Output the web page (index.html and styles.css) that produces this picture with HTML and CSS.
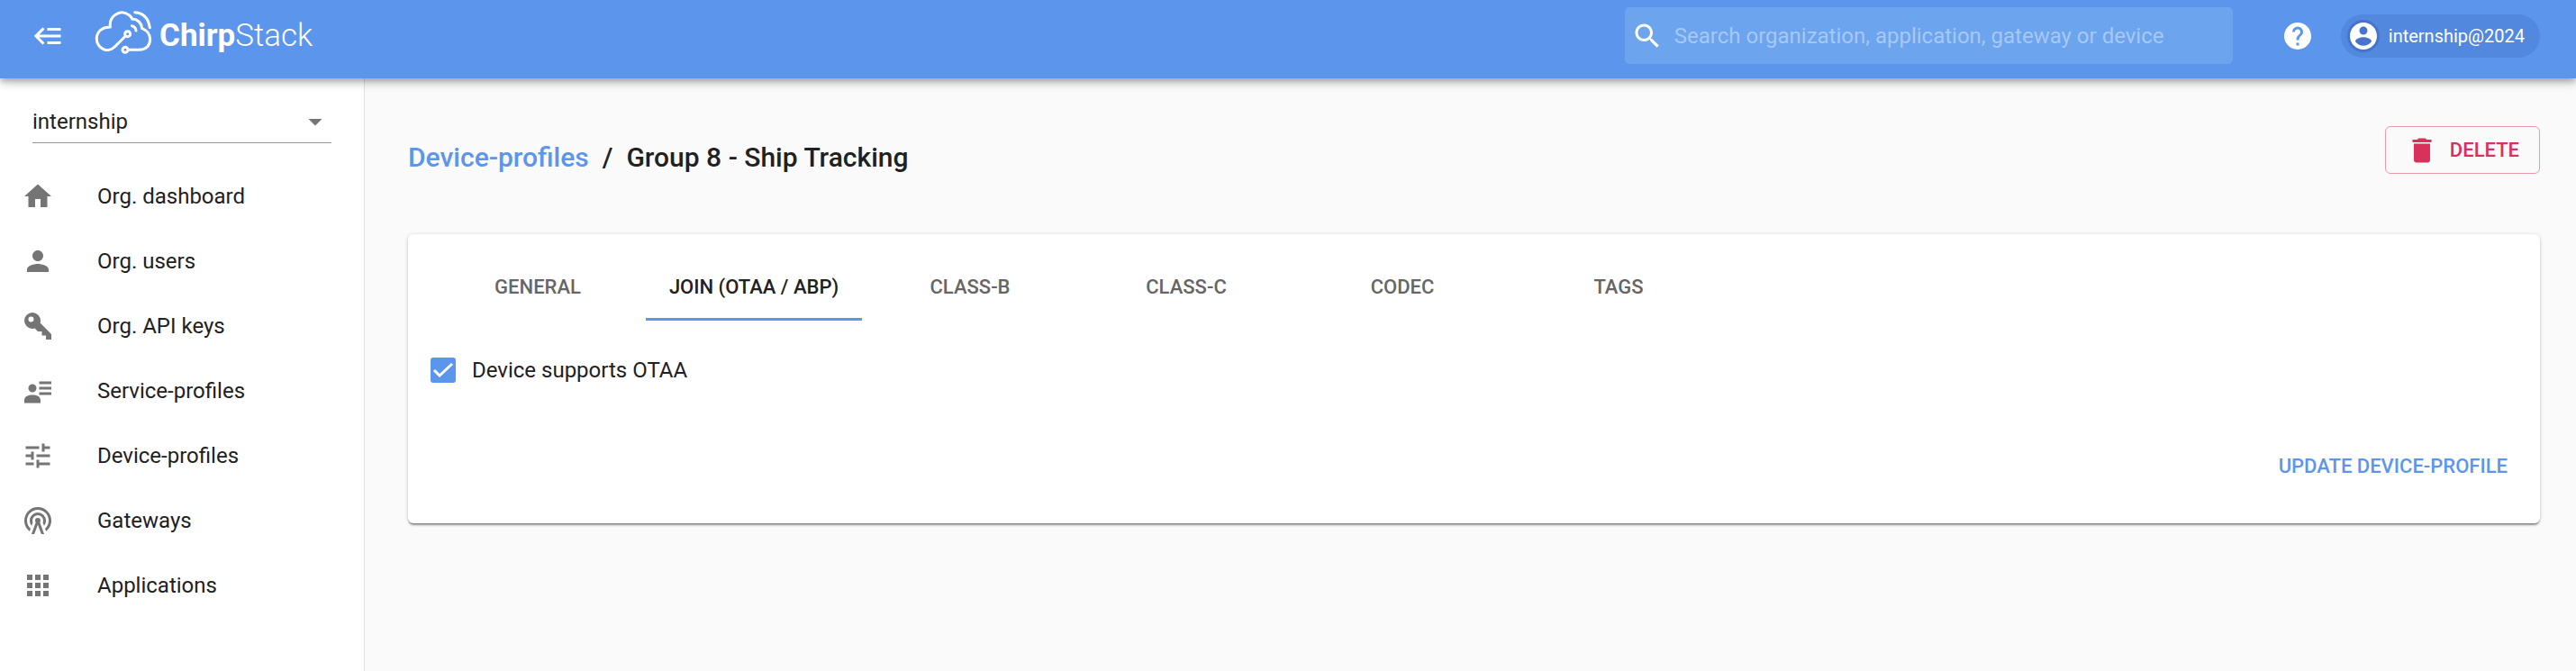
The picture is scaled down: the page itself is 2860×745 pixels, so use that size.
FILE: index.html
```html
<!DOCTYPE html>
<html lang="en">
<head>
<meta charset="utf-8">
<title>ChirpStack</title>
<link rel="stylesheet" href="styles.css">
</head>
<body>
<header class="topbar">
  <button class="icon-button" type="button" aria-label="Toggle menu"><svg class="icon" viewBox="0 0 24 24"><path d="M5,13L9,17L7.6,18.42L1.18,12L7.6,5.58L9,7L5,11H21V13H5M21,6V8H11V6H21M21,16V18H11V16H21Z"/></svg></button>
  <a class="logo" href="#">
    <svg class="logo-mark" viewBox="42 30 195 150" aria-hidden="true">
      <g fill="none" stroke="#fff" stroke-width="9" stroke-linecap="round">
        <path d="M148 117L115 150Q102 164 86 164A38 38 0 1 1 94 88L97 87Q94 61 113 47Q137 29 161 48Q167 53 170 60Q199 62 203 92Q230 101 230 129Q228 162 193 163H158"/>
        <circle cx="155" cy="110" r="9"/>
        <circle cx="147" cy="163" r="9"/>
        <path d="M179 38Q222 41 229 89M169 83Q182 86 183 99"/>
      </g>
    </svg>
    <span class="logo-text"><b>Chirp</b>Stack</span>
  </a>
  <form class="search" role="search">
    <svg class="icon" viewBox="0 0 24 24" aria-hidden="true"><path d="M15.5 14h-.79l-.28-.27C15.41 12.59 16 11.11 16 9.5 16 5.91 13.09 3 9.5 3S3 5.91 3 9.5 5.91 16 9.5 16c1.61 0 3.09-.59 4.23-1.57l.27.28v.79l5 4.99L20.49 19l-4.99-5zm-6 0C7.01 14 5 11.99 5 9.5S7.01 5 9.5 5 14 7.01 14 9.5 11.99 14 9.5 14z"/></svg>
    <input class="search-input" type="text" aria-label="Search" placeholder="Search organization, application, gateway or device">
  </form>
  <a class="icon-button help" href="#" aria-label="Help"><svg class="icon" viewBox="0 0 24 24"><path d="M15.07,11.25L14.17,12.17C13.45,12.89 13,13.5 13,15H11V14.5C11,13.39 11.45,12.39 12.17,11.67L13.41,10.41C13.78,10.05 14,9.55 14,9C14,7.89 13.1,7 12,7A2,2 0 0,0 10,9H8A4,4 0 0,1 12,5A4,4 0 0,1 16,9C16,9.88 15.64,10.67 15.07,11.25M13,19H11V17H13M12,2A10,10 0 0,0 2,12A10,10 0 0,0 12,22A10,10 0 0,0 22,12C22,6.47 17.5,2 12,2Z"/></svg></a>
  <button class="chip" type="button">
    <span class="avatar"><svg class="icon" viewBox="0 0 24 24"><path d="M12 2C6.48 2 2 6.48 2 12s4.48 10 10 10 10-4.48 10-10S17.52 2 12 2zm0 3c1.66 0 3 1.34 3 3s-1.34 3-3 3-3-1.34-3-3 1.34-3 3-3zm0 14.2c-2.5 0-4.71-1.28-6-3.22.03-1.99 4-3.08 6-3.08 1.99 0 5.97 1.09 6 3.08-1.29 1.94-3.5 3.22-6 3.22z"/></svg></span>
    internship@2024
  </button>
</header>
<div class="layout">
  <aside class="sidebar">
    <div class="org-field">
      <select class="org-select" aria-label="Organization"><option>internship</option></select>
      <svg class="org-arrow" viewBox="0 0 24 24" aria-hidden="true"><path d="M7 10l5 5 5-5z"/></svg>
    </div>
    <nav class="nav">
      <a class="nav-item" href="#"><svg class="icon" viewBox="0 0 24 24"><path d="M10 20v-6h4v6h5v-8h3L12 3 2 12h3v8z"/></svg>Org. dashboard</a>
      <a class="nav-item" href="#"><svg class="icon" viewBox="0 0 24 24"><path d="M12 12c2.21 0 4-1.79 4-4s-1.79-4-4-4-4 1.79-4 4 1.79 4 4 4zm0 2c-2.67 0-8 1.34-8 4v2h16v-2c0-2.66-5.33-4-8-4z"/></svg>Org. users</a>
      <a class="nav-item" href="#"><svg class="icon" viewBox="0 0 24 24"><path d="M22,18V22H18V19H15V16H12L9.74,13.74C9.19,13.91 8.61,14 8,14A6,6 0 0,1 2,8A6,6 0 0,1 8,2A6,6 0 0,1 14,8C14,8.61 13.91,9.19 13.74,9.74L22,18M7,5A2,2 0 0,0 5,7A2,2 0 0,0 7,9A2,2 0 0,0 9,7A2,2 0 0,0 7,5Z"/></svg>Org. API keys</a>
      <a class="nav-item" href="#"><svg class="icon" viewBox="0 0 24 24"><path d="M13 5h9v2h-9zM13 9h9v2h-9zM13 13h9v2h-9zM8 7a3 3 0 1 0 0 6a3 3 0 1 0 0-6zM8 15c-3 0-6 1-6 4v2h12v-2c0-3-3-4-6-4z"/></svg>Service-profiles</a>
      <a class="nav-item" href="#"><svg class="icon" viewBox="0 0 24 24"><path d="M3 17v2h6v-2H3zM3 5v2h10V5H3zm10 16v-2h8v-2h-8v-2h-2v6h2zM7 9v2H3v2h4v2h2V9H7zm14 4v-2H11v2h10zm-6-4h2V7h4V5h-4V3h-2v6z"/></svg>Device-profiles</a>
      <a class="nav-item" href="#"><svg class="icon" viewBox="0 0 24 24"><path d="M12,10A2,2 0 0,1 14,12C14,12.5 13.82,12.94 13.53,13.29L16.7,22H14.57L12,14.93L9.43,22H7.3L10.47,13.29C10.18,12.94 10,12.5 10,12A2,2 0 0,1 12,10M12,8A4,4 0 0,0 8,12C8,12.5 8.1,13 8.28,13.46L7.4,15.86C6.53,14.81 6,13.47 6,12A6,6 0 0,1 12,6A6,6 0 0,1 18,12C18,13.47 17.47,14.81 16.6,15.86L15.72,13.46C15.9,13 16,12.5 16,12A4,4 0 0,0 12,8M12,4A8,8 0 0,0 4,12C4,14.36 5,16.5 6.64,17.94L5.92,19.94C3.54,18.11 2,15.23 2,12A10,10 0 0,1 12,2A10,10 0 0,1 22,12C22,15.23 20.46,18.11 18.08,19.94L17.36,17.94C19,16.5 20,14.36 20,12A8,8 0 0,0 12,4Z"/></svg>Gateways</a>
      <a class="nav-item" href="#"><svg class="icon" viewBox="0 0 24 24"><path d="M4 4h4v4H4zM10 4h4v4h-4zM16 4h4v4h-4zM4 10h4v4H4zM10 10h4v4h-4zM16 10h4v4h-4zM4 16h4v4H4zM10 16h4v4h-4zM16 16h4v4h-4z"/></svg>Applications</a>
    </nav>
  </aside>
  <main class="main">
    <div class="title-row">
      <h1 class="title"><a href="#">Device-profiles</a><span>/</span><span>Group 8 - Ship Tracking</span></h1>
      <button class="delete-button" type="button"><svg class="icon" viewBox="0 0 24 24"><path d="M19,4H15.5L14.5,3H9.5L8.5,4H5V6H19M6,19A2,2 0 0,0 8,21H16A2,2 0 0,0 18,19V7H6V19Z"/></svg>DELETE</button>
    </div>
    <section class="card">
      <div class="tabs" role="tablist">
        <button class="tab" type="button" role="tab">GENERAL</button>
        <button class="tab tab-active" type="button" role="tab" aria-selected="true">JOIN (OTAA / ABP)</button>
        <button class="tab" type="button" role="tab">CLASS-B</button>
        <button class="tab" type="button" role="tab">CLASS-C</button>
        <button class="tab" type="button" role="tab">CODEC</button>
        <button class="tab" type="button" role="tab">TAGS</button>
      </div>
      <label class="check-row">
        <span class="check-box">
          <input class="check-input" type="checkbox" checked>
          <svg class="check-mark" viewBox="0 0 28 28" aria-hidden="true"><path d="M4 14l6 6L24 7"/></svg>
        </span>
        Device supports OTAA
      </label>
      <div class="actions"><button class="update-button" type="button">UPDATE DEVICE-PROFILE</button></div>
    </section>
  </main>
</div>
</body>
</html>
```
FILE: styles.css
```css
* {
  box-sizing: border-box;
}

body {
  display: flex;
  flex-direction: column;
  min-height: 100vh;
  margin: 0;
  background: #fafafa;
  color: #212121;
  font-family: Roboto, "Liberation Sans", sans-serif;
  font-size: 24px;
  line-height: 36px;
}

a {
  color: inherit;
  text-decoration: none;
}

button,
input,
select {
  margin: 0;
  padding: 0;
  border: 0;
  background: none;
  color: inherit;
  font: inherit;
}

.icon {
  display: block;
  flex: none;
  width: 36px;
  height: 36px;
  fill: currentColor;
}

.topbar {
  position: relative;
  z-index: 1;
  display: flex;
  align-items: center;
  padding: 8px 40px 16px 36px;
  background: #5c95ec;
  color: #fff;
  box-shadow: 0 3px 6px -1px rgba(0, 0, 0, 0.2), 0 6px 8px rgba(0, 0, 0, 0.14), 0 2px 15px rgba(0, 0, 0, 0.12);
}

.logo {
  display: flex;
  align-items: center;
  gap: 8px;
  margin-left: 32px;
}

.logo-mark {
  width: 65px;
  height: 50px;
  margin-bottom: 8px;
}

.logo-text {
  font-size: 35px;
  font-weight: 300;
}

.logo-text b {
  font-weight: 700;
}

.search {
  display: flex;
  align-items: center;
  gap: 12px;
  width: 675px;
  height: 63px;
  margin-left: auto;
  padding: 0 7px;
  border-radius: 5px;
  background: #6ca4ee;
}

.search-input {
  flex: 1;
  min-width: 0;
  outline: 0;
}

.search-input::placeholder {
  color: #a6c8f5;
  opacity: 1;
}

.help {
  margin-left: 54px;
}

.chip {
  display: flex;
  align-items: center;
  gap: 10px;
  height: 48px;
  margin-left: 30px;
  padding: 0 17px 0 7px;
  border-radius: 24px;
  background: #5388df;
  font-size: 20px;
}

.avatar {
  border-radius: 50%;
  background: #4674cc;
}

.layout {
  display: flex;
  flex: 1;
}

.sidebar {
  flex: none;
  width: 405px;
  border-right: 1px solid #e0e0e0;
  background: #fff;
}

.org-field {
  position: relative;
  margin: 25px 36px 23px;
  border-bottom: 1px solid #949494;
}

.org-select {
  display: block;
  width: 100%;
  height: 46px;
  appearance: none;
}

.org-arrow {
  position: absolute;
  top: 5px;
  right: 0;
  width: 36px;
  height: 36px;
  fill: #757575;
}

.nav-item {
  display: flex;
  align-items: center;
  gap: 48px;
  height: 72px;
  padding-left: 24px;
}

.nav-item .icon {
  fill: #757575;
}

.main {
  flex: 1;
  padding: 53px 40px 48px 48px;
}

.title-row {
  display: flex;
  justify-content: space-between;
  align-items: flex-start;
  margin-bottom: 67px;
}

.title {
  display: flex;
  gap: 15px;
  margin: 17px 0 0;
  font-size: 30px;
  font-weight: 500;
}

.title a {
  color: #5c95ec;
}

.delete-button {
  display: flex;
  align-items: center;
  gap: 13px;
  height: 53px;
  padding: 0 22px;
  border: 1px solid #eb98ad;
  border-radius: 6px;
  color: #d8315b;
  font-size: 22px;
  font-weight: 500;
}

.card {
  padding: 24px 24px 36px;
  border-radius: 6px;
  background: #fff;
  box-shadow: 0 1px 4px rgba(0, 0, 0, 0.2), 0 1px 1px rgba(0, 0, 0, 0.14), 0 3px 2px -1px rgba(0, 0, 0, 0.3);
}

.tabs {
  display: flex;
}

.tab {
  width: 240px;
  height: 72px;
  border-bottom: 3px solid transparent;
  color: #666;
  font-size: 22px;
  font-weight: 500;
}

.tab-active {
  border-color: #5c95ec;
  color: #212121;
}

.check-row {
  display: flex;
  align-items: center;
  gap: 18px;
  width: fit-content;
  margin: 37px 0 0 1px;
}

.check-box {
  position: relative;
  width: 28px;
  height: 28px;
}

.check-input {
  display: block;
  width: 28px;
  height: 28px;
  border-radius: 3px;
  appearance: none;
}

.check-input:checked {
  background: #5c95ec;
}

.check-mark {
  position: absolute;
  inset: 0;
  fill: none;
  stroke: #fff;
  stroke-width: 3;
}

.actions {
  display: flex;
  justify-content: flex-end;
  margin-top: 62px;
}

.update-button {
  height: 54px;
  padding: 0 12px;
  color: #5c95ec;
  font-size: 22px;
  font-weight: 500;
}
```
